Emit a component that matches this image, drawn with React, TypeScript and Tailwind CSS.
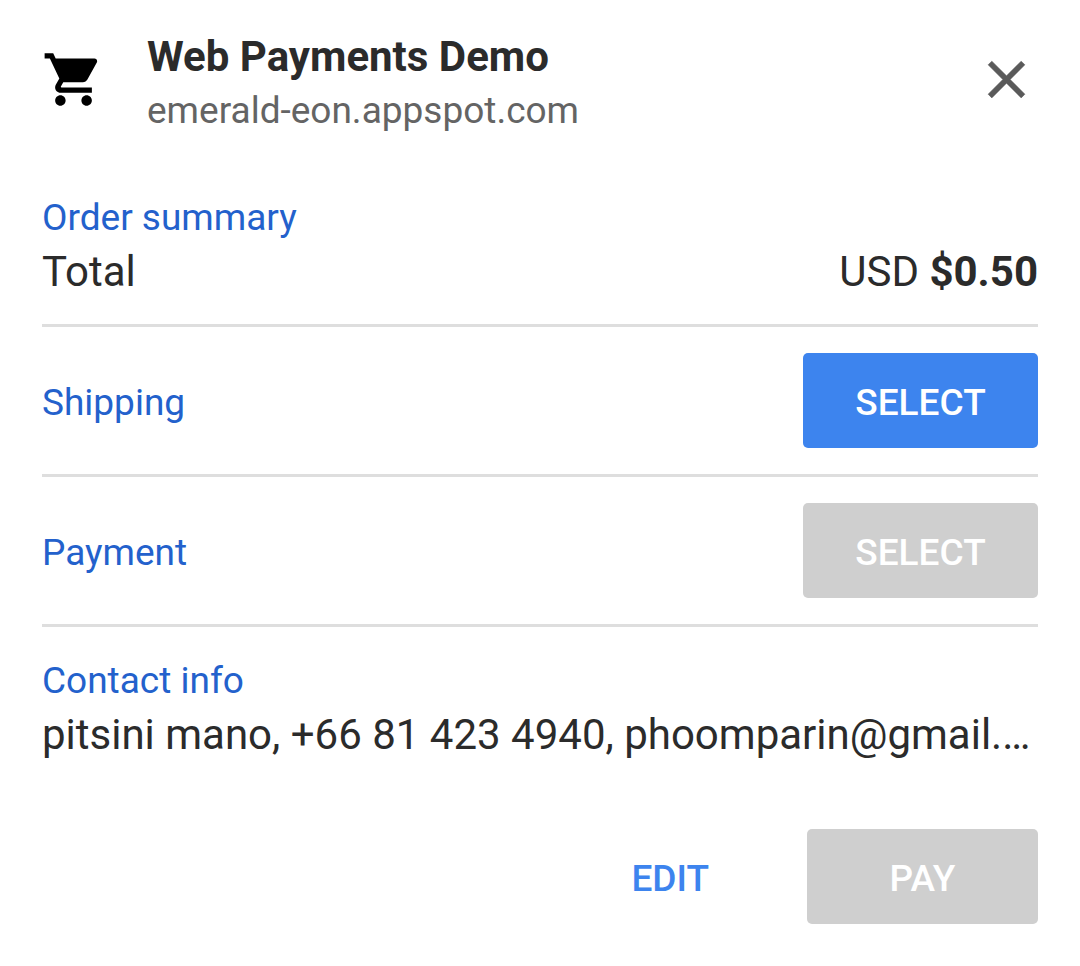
import React from "react";

const font = "font-['Roboto','Liberation_Sans',sans-serif]";

function CartIcon() {
  return (
    <svg viewBox="0 0 24 24" className="mt-4 size-[63px] shrink-0" fill="#000" aria-hidden="true">
      <path d="M7 18c-1.1 0-1.99.9-1.99 2S5.9 22 7 22s2-.9 2-2-.9-2-2-2zM1 2v2h2l3.6 7.59-1.35 2.45c-.16.28-.25.61-.25.96 0 1.1.9 2 2 2h12v-2H7.42c-.14 0-.25-.11-.25-.25l.03-.12.9-1.63h7.45c.75 0 1.41-.41 1.75-1.03l3.58-6.49c.08-.14.12-.31.12-.48 0-.55-.45-1-1-1H5.21l-.94-2H1zm16 16c-1.1 0-1.99.9-1.99 2s.89 2 1.99 2 2-.9 2-2-.9-2-2-2z" />
    </svg>
  );
}

function CloseIcon() {
  return (
    <svg
      viewBox="0 0 24 24"
      className="size-[63px]"
      fill="#5a5a5a"
      stroke="#5a5a5a"
      strokeWidth="0.2"
      aria-hidden="true"
    >
      <path d="M19 6.41L17.59 5 12 10.59 6.41 5 5 6.41 10.59 12 5 17.59 6.41 19 12 13.41 17.59 19 19 17.59 13.41 12z" />
    </svg>
  );
}

function SelectRow({ label, disabled }: { label: string; disabled?: boolean }) {
  return (
    <section className="flex items-center justify-between border-b-3 border-[#dedede] py-[26px]">
      <h2 className="pt-1 text-[37px] leading-[44px] text-[#2361cc]">{label}</h2>
      <button
        type="button"
        disabled={disabled}
        aria-label={`Select ${label}`}
        className="h-[95px] w-[235px] rounded-[5px] bg-[#3d84ee] pt-1 text-[37px] font-medium text-white disabled:bg-[#cfcfcf]"
      >
        SELECT
      </button>
    </section>
  );
}

export default function App() {
  return (
    <main className={`min-h-screen bg-white px-[42px] pt-[32px] pb-[42px] text-[#2b2b2b] ${font}`}>
      <header className="flex items-start">
        <CartIcon />
        <div className="ml-[42px] min-w-0 flex-1">
          <h1 className="truncate text-[42px] leading-[50px] font-bold">Web Payments Demo</h1>
          <p className="mt-[6px] truncate text-[37px] leading-[46px] text-[#646464]">emerald-eon.appspot.com</p>
        </div>
        <button type="button" aria-label="Close" className="mt-4">
          <CloseIcon />
        </button>
      </header>

      <section className="mt-[62px] border-b-3 border-[#dedede] pb-[25px]">
        <h2 className="text-[37px] leading-[44px] text-[#2361cc]">Order summary</h2>
        <div className="mt-[5px] flex justify-between text-[42px] leading-[54px]">
          <span>Total</span>
          <span>
            USD <b>$0.50</b>
          </span>
        </div>
      </section>

      <SelectRow label="Shipping" />
      <SelectRow label="Payment" disabled />

      <section className="pt-[32px]">
        <h2 className="text-[37px] leading-[44px] text-[#2361cc]">Contact info</h2>
        <p className="mt-[5px] truncate text-[42px] leading-[54px]">
          pitsini mano, +66 81 423 4940, phoomparin@gmail.com
        </p>
      </section>

      <footer className="mt-[67px] flex items-center justify-end">
        <button type="button" className="h-[95px] px-[52px] pt-1 text-[37px] font-medium text-[#3d84ee]">
          EDIT
        </button>
        <button
          type="button"
          disabled
          className="ml-[46px] h-[95px] w-[231px] rounded-[5px] bg-[#cfcfcf] pt-1 text-[37px] font-medium text-white"
        >
          PAY
        </button>
      </footer>
    </main>
  );
}
